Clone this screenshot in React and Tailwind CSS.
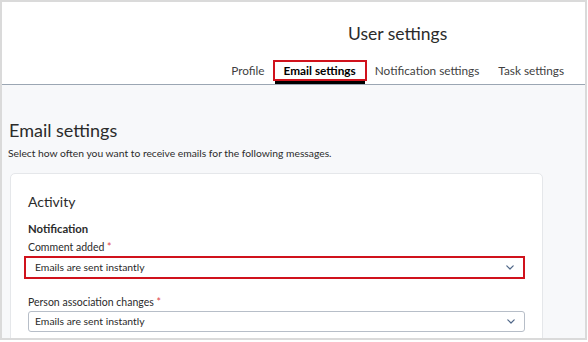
import React from "react";

const Chevron = () => (
  <svg width="8" height="5" viewBox="0 0 8 5" className="shrink-0">
    <polyline points="0.8,0.8 4,4 7.2,0.8" fill="none" stroke="#4f6788" strokeWidth="1.2" strokeLinecap="round" strokeLinejoin="round" />
  </svg>
);

export default function App() {
  return (
    <div className="w-[588px] h-[342px] bg-white" style={{ fontFamily: "Lato, 'Open Sans', sans-serif" }}>
      <div className="w-[587px] h-[340px] border-2 border-[#dadada] overflow-hidden flex flex-col bg-[#f7f8fa]">
        {/* Header */}
        <div className="bg-white border-b border-[#9ba6b3] flex justify-end pr-[21px] pt-[22px] shrink-0">
          <div className="flex flex-col items-center">
            <div className="text-[17.5px] leading-[20px] text-[#2b2b2b]">User settings</div>
            <div className="flex items-start mt-[16px] text-[11.8px] text-[#3f3f3f]">
              <div className="h-[21px] flex items-center leading-[17px] mr-[8px]">Profile</div>
              <div className="flex flex-col">
                <div className="h-[21px] border-2 border-[#d0121c] px-[9px] flex items-center leading-[17px] font-bold text-black">
                  Email settings
                </div>
                <div className="h-[3px] bg-black mx-[2px]" />
              </div>
              <div className="h-[21px] flex items-center leading-[17px] ml-[8px]">Notification settings</div>
              <div className="h-[21px] flex items-center leading-[17px] ml-[19px]">Task settings</div>
            </div>
          </div>
        </div>

        {/* Body */}
        <div className="flex-1 pl-[6px] pt-[35px]">
          <div className="text-[18px] leading-[20px] text-[#2b2b2b] pl-[1px]">Email settings</div>
          <div className="text-[10.3px] leading-[14px] text-[#2b2b2b] mt-[6px]">
            Select how often you want to receive emails for the following messages.
          </div>
          <div className="ml-[2px] mt-[13px] w-[533px] h-[200px] bg-white border border-[#e5e7ea] rounded-[5px] pl-[17px] pr-[17px] pt-[19px]">
            <div className="text-[14px] leading-[18px] text-[#2b2b2b]">Activity</div>
            <div className="mt-[11px] text-[11.3px] leading-[14px] font-bold text-[#2b2b2b]">Notification</div>
            <div className="mt-[4px] text-[10.5px] leading-[14px] text-[#2b2b2b]">
              Comment added <span className="text-[#e0464e]">*</span>
            </div>
            <div className="mt-[2px] -ml-[4px] w-[501px] h-[23px] border-2 border-[#d0121c] flex items-center justify-between pl-[9px] pr-[9px]">
              <span className="text-[10.4px] text-[#2b2b2b]">Emails are sent instantly</span>
              <Chevron />
            </div>
            <div className="mt-[16px] text-[10.5px] leading-[14px] text-[#2b2b2b]">
              Person association changes <span className="text-[#e0464e]">*</span>
            </div>
            <div className="mt-[2px] w-[497px] h-[21px] border border-[#b7bec8] rounded-[3px] flex items-center justify-between pl-[6px] pr-[9px]">
              <span className="text-[10.4px] text-[#2b2b2b]">Emails are sent instantly</span>
              <Chevron />
            </div>
          </div>
        </div>
      </div>
    </div>
  );
}
